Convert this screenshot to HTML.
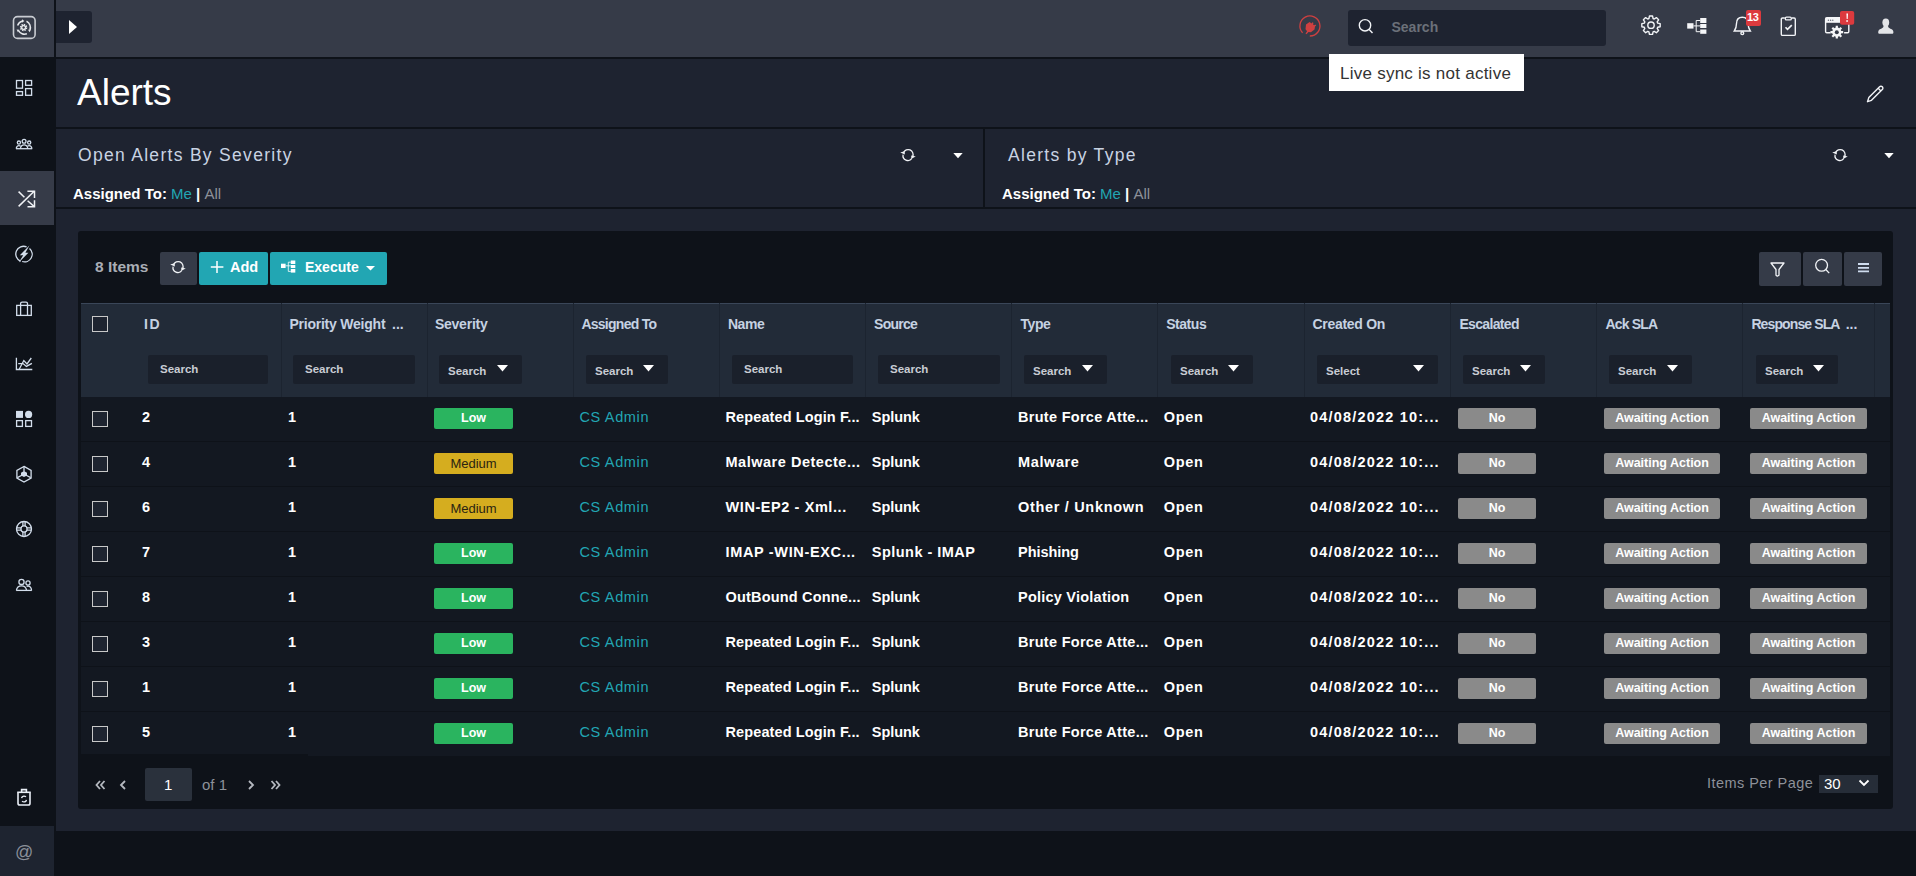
<!DOCTYPE html><html><head><meta charset="utf-8"><style>
*{box-sizing:border-box;margin:0;padding:0}
html,body{width:1916px;height:876px;overflow:hidden;background:#0e1219;font-family:"Liberation Sans", sans-serif;}
.a{position:absolute}
.t{position:absolute;white-space:nowrap;line-height:1}
svg{display:block}

</style></head><body>
<div class="a" style="left:0;top:0;width:54px;height:57px;background:#363b48"></div>
<div class="a" style="left:0;top:171px;width:54px;height:54px;background:#363b48"></div>
<div class="a" style="left:0;top:826px;width:54px;height:50px;background:#1e2430"></div>
<div class="a" style="left:56px;top:0;width:1860px;height:57px;background:#363b48"></div>
<div class="a" style="left:56px;top:11px;width:36px;height:32px;background:#1e2330;border-radius:0 3px 3px 0"></div>
<svg class="a" style="left:68px;top:19px" width="10" height="16" viewBox="0 0 10 16"><path d="M1 1L9 8L1 15z" fill="#fff"/></svg>
<div class="a" style="left:1348px;top:10px;width:258px;height:36px;background:#1e2330;border-radius:3px"></div>
<div class="t" style="left:1391.5px;top:20px;font-size:14px;color:#6b7079;font-weight:bold">Search</div>
<div class="a" style="left:56px;top:59px;width:1860px;height:772px;background:#1e2330"></div>
<div class="a" style="left:56px;top:127px;width:1860px;height:2px;background:#0e1219"></div>
<div class="a" style="left:56px;top:207px;width:1860px;height:2px;background:#0e1219"></div>
<div class="a" style="left:983px;top:129px;width:2px;height:78px;background:#0e1219"></div>
<div class="t" style="left:77px;top:74px;font-size:37px;color:#fff">Alerts</div>
<div class="t" style="left:78px;top:147px;font-size:17.5px;color:#c9d3e3;letter-spacing:1.3px">Open Alerts By Severity</div>
<div class="t" style="left:1008px;top:147px;font-size:17.5px;color:#c9d3e3;letter-spacing:1.3px">Alerts by Type</div>
<div class="t" style="left:73px;top:186px;font-size:15px;color:#fff;font-weight:bold">Assigned To: <span style="color:#22a6b3;font-weight:normal">Me</span> | <span style="color:#8d9199;font-weight:normal">All</span></div>
<div class="t" style="left:1002px;top:186px;font-size:15px;color:#fff;font-weight:bold">Assigned To: <span style="color:#22a6b3;font-weight:normal">Me</span> | <span style="color:#8d9199;font-weight:normal">All</span></div>
<div class="a" style="left:78px;top:231px;width:1815px;height:578px;background:#0e1219;border-radius:3px"></div>
<div class="t" style="left:95px;top:259px;font-size:15.5px;color:#a9adb5;font-weight:bold">8 Items</div>
<div class="a" style="left:160px;top:252px;width:37px;height:33px;background:#353b48;border-radius:2px"></div>
<div class="a" style="left:199px;top:252px;width:69px;height:33px;background:#22a6b3;border-radius:2px"></div>
<div class="a" style="left:270px;top:252px;width:117px;height:33px;background:#22a6b3;border-radius:2px"></div>
<div class="t" style="left:230px;top:260px;font-size:14.5px;color:#fff;font-weight:bold">Add</div>
<div class="t" style="left:305px;top:260px;font-size:14px;color:#fff;font-weight:bold">Execute</div>
<div class="a" style="left:1759px;top:252px;width:42px;height:34px;background:#353b48;border-radius:2px"></div>
<div class="a" style="left:1803px;top:252px;width:39px;height:34px;background:#353b48;border-radius:2px"></div>
<div class="a" style="left:1844px;top:252px;width:38px;height:34px;background:#353b48;border-radius:2px"></div>
<div class="a" style="left:81px;top:303px;width:1809px;height:94px;background:#222b38"></div>
<div class="a" style="left:81px;top:303px;width:1809px;height:1px;background:#3a4658"></div>
<div class="a" style="left:281px;top:303px;width:1px;height:94px;background:#1c2430"></div>
<div class="a" style="left:427px;top:303px;width:1px;height:94px;background:#1c2430"></div>
<div class="a" style="left:573px;top:303px;width:1px;height:94px;background:#1c2430"></div>
<div class="a" style="left:719px;top:303px;width:1px;height:94px;background:#1c2430"></div>
<div class="a" style="left:865px;top:303px;width:1px;height:94px;background:#1c2430"></div>
<div class="a" style="left:1011px;top:303px;width:1px;height:94px;background:#1c2430"></div>
<div class="a" style="left:1157px;top:303px;width:1px;height:94px;background:#1c2430"></div>
<div class="a" style="left:1304px;top:303px;width:1px;height:94px;background:#1c2430"></div>
<div class="a" style="left:1450px;top:303px;width:1px;height:94px;background:#1c2430"></div>
<div class="a" style="left:1596px;top:303px;width:1px;height:94px;background:#1c2430"></div>
<div class="a" style="left:1742px;top:303px;width:1px;height:94px;background:#1c2430"></div>
<div class="a" style="left:1874px;top:303px;width:1px;height:94px;background:#1c2430"></div>
<div class="a" style="left:92px;top:316px;width:16px;height:16px;border:1.5px solid #c8c8c8;background:#1e2430"></div>
<div class="t" style="left:143.9px;top:317px;font-size:14px;color:#c6d2e2;font-weight:bold;letter-spacing:1.6px">ID</div>
<div class="a" style="left:148px;top:355px;width:120px;height:29px;background:#1a202b;border-radius:2px"></div>
<div class="t" style="left:160px;top:364px;font-size:11.5px;color:#c8ccd4;font-weight:bold">Search</div>
<div class="t" style="left:289.4px;top:317px;font-size:14px;color:#c6d2e2;font-weight:bold;letter-spacing:-0.222px">Priority Weight</div>
<div class="t" style="left:392.0px;top:317px;font-size:14px;color:#c6d2e2;font-weight:bold">...</div>
<div class="a" style="left:293px;top:355px;width:122px;height:29px;background:#1a202b;border-radius:2px"></div>
<div class="t" style="left:305px;top:364px;font-size:11.5px;color:#c8ccd4;font-weight:bold">Search</div>
<div class="t" style="left:434.9px;top:317px;font-size:14px;color:#c6d2e2;font-weight:bold;letter-spacing:-0.226px">Severity</div>
<div class="a" style="left:439px;top:355px;width:83px;height:29px;background:#1a202b;border-radius:2px"></div>
<div class="t" style="left:448px;top:366px;font-size:11.5px;color:#c8ccd4;font-weight:bold">Search</div>
<svg class="a" style="left:497px;top:365px" width="11" height="7" viewBox="0 0 11 7"><path d="M0 0h11L5.5 6.5z" fill="#fff"/></svg>
<div class="t" style="left:581.4px;top:317px;font-size:14px;color:#c6d2e2;font-weight:bold;letter-spacing:-0.737px">Assigned To</div>
<div class="a" style="left:586px;top:355px;width:82px;height:29px;background:#1a202b;border-radius:2px"></div>
<div class="t" style="left:595px;top:366px;font-size:11.5px;color:#c8ccd4;font-weight:bold">Search</div>
<svg class="a" style="left:643px;top:365px" width="11" height="7" viewBox="0 0 11 7"><path d="M0 0h11L5.5 6.5z" fill="#fff"/></svg>
<div class="t" style="left:727.9px;top:317px;font-size:14px;color:#c6d2e2;font-weight:bold;letter-spacing:-0.447px">Name</div>
<div class="a" style="left:732px;top:355px;width:121px;height:29px;background:#1a202b;border-radius:2px"></div>
<div class="t" style="left:744px;top:364px;font-size:11.5px;color:#c8ccd4;font-weight:bold">Search</div>
<div class="t" style="left:874.1px;top:317px;font-size:14px;color:#c6d2e2;font-weight:bold;letter-spacing:-0.754px">Source</div>
<div class="a" style="left:878px;top:355px;width:122px;height:29px;background:#1a202b;border-radius:2px"></div>
<div class="t" style="left:890px;top:364px;font-size:11.5px;color:#c8ccd4;font-weight:bold">Search</div>
<div class="t" style="left:1020.4px;top:317px;font-size:14px;color:#c6d2e2;font-weight:bold;letter-spacing:-0.38px">Type</div>
<div class="a" style="left:1024px;top:355px;width:83px;height:29px;background:#1a202b;border-radius:2px"></div>
<div class="t" style="left:1033px;top:366px;font-size:11.5px;color:#c8ccd4;font-weight:bold">Search</div>
<svg class="a" style="left:1082px;top:365px" width="11" height="7" viewBox="0 0 11 7"><path d="M0 0h11L5.5 6.5z" fill="#fff"/></svg>
<div class="t" style="left:1166.2px;top:317px;font-size:14px;color:#c6d2e2;font-weight:bold;letter-spacing:-0.459px">Status</div>
<div class="a" style="left:1171px;top:355px;width:82px;height:29px;background:#1a202b;border-radius:2px"></div>
<div class="t" style="left:1180px;top:366px;font-size:11.5px;color:#c8ccd4;font-weight:bold">Search</div>
<svg class="a" style="left:1228px;top:365px" width="11" height="7" viewBox="0 0 11 7"><path d="M0 0h11L5.5 6.5z" fill="#fff"/></svg>
<div class="t" style="left:1312.4px;top:317px;font-size:14px;color:#c6d2e2;font-weight:bold;letter-spacing:-0.274px">Created On</div>
<div class="a" style="left:1317px;top:355px;width:121px;height:29px;background:#1a202b;border-radius:2px"></div>
<div class="t" style="left:1326px;top:366px;font-size:11.5px;color:#c8ccd4;font-weight:bold">Select</div>
<svg class="a" style="left:1413px;top:365px" width="11" height="7" viewBox="0 0 11 7"><path d="M0 0h11L5.5 6.5z" fill="#fff"/></svg>
<div class="t" style="left:1459.4px;top:317px;font-size:14px;color:#c6d2e2;font-weight:bold;letter-spacing:-0.659px">Escalated</div>
<div class="a" style="left:1463px;top:355px;width:82px;height:29px;background:#1a202b;border-radius:2px"></div>
<div class="t" style="left:1472px;top:366px;font-size:11.5px;color:#c8ccd4;font-weight:bold">Search</div>
<svg class="a" style="left:1520px;top:365px" width="11" height="7" viewBox="0 0 11 7"><path d="M0 0h11L5.5 6.5z" fill="#fff"/></svg>
<div class="t" style="left:1605.4px;top:317px;font-size:14px;color:#c6d2e2;font-weight:bold;letter-spacing:-0.813px">Ack SLA</div>
<div class="a" style="left:1609px;top:355px;width:83px;height:29px;background:#1a202b;border-radius:2px"></div>
<div class="t" style="left:1618px;top:366px;font-size:11.5px;color:#c8ccd4;font-weight:bold">Search</div>
<svg class="a" style="left:1667px;top:365px" width="11" height="7" viewBox="0 0 11 7"><path d="M0 0h11L5.5 6.5z" fill="#fff"/></svg>
<div class="t" style="left:1751.4px;top:317px;font-size:14px;color:#c6d2e2;font-weight:bold;letter-spacing:-0.883px">Response SLA</div>
<div class="t" style="left:1845.7px;top:317px;font-size:14px;color:#c6d2e2;font-weight:bold">...</div>
<div class="a" style="left:1756px;top:355px;width:82px;height:29px;background:#1a202b;border-radius:2px"></div>
<div class="t" style="left:1765px;top:366px;font-size:11.5px;color:#c8ccd4;font-weight:bold">Search</div>
<svg class="a" style="left:1813px;top:365px" width="11" height="7" viewBox="0 0 11 7"><path d="M0 0h11L5.5 6.5z" fill="#fff"/></svg>
<div class="a" style="left:81px;top:397px;width:1809px;height:44px;background:#131821"></div>
<div class="a" style="left:92px;top:411px;width:16px;height:16px;border:1.5px solid #c8c8c8;background:#1e2430"></div>
<div class="t" style="left:142.0px;top:410px;font-size:14.5px;color:#fff;font-weight:bold;letter-spacing:0px">2</div>
<div class="t" style="left:288.0px;top:410px;font-size:14.5px;color:#fff;font-weight:bold;letter-spacing:0px">1</div>
<div class="a" style="left:434px;top:408px;width:79px;height:21px;background:#2ab45f;border-radius:2px;color:#fff;font-size:12.5px;font-weight:bold;text-align:center;line-height:21px">Low</div>
<div class="t" style="left:579.5px;top:410px;font-size:14.5px;color:#22a6b3;font-weight:normal;letter-spacing:0.652px">CS Admin</div>
<div class="t" style="left:725.5px;top:410px;font-size:14.5px;color:#fff;font-weight:bold;letter-spacing:0.112px">Repeated Login F...</div>
<div class="t" style="left:871.8px;top:410px;font-size:14.5px;color:#fff;font-weight:bold;letter-spacing:-0.039px">Splunk</div>
<div class="t" style="left:1018.0px;top:410px;font-size:14.5px;color:#fff;font-weight:bold;letter-spacing:0.289px">Brute Force Atte...</div>
<div class="t" style="left:1163.7px;top:410px;font-size:14.5px;color:#fff;font-weight:bold;letter-spacing:0.663px">Open</div>
<div class="t" style="left:1310.0px;top:410px;font-size:14.5px;color:#fff;font-weight:bold;letter-spacing:1.187px">04/08/2022 10:...</div>
<div class="a" style="left:1458px;top:408px;width:78px;height:21px;background:#8a8a8a;border-radius:2px;color:#fff;font-size:12.5px;font-weight:bold;text-align:center;line-height:21px">No</div>
<div class="a" style="left:1604px;top:408px;width:116px;height:21px;background:#8a8a8a;border-radius:2px;color:#fff;font-size:12.5px;font-weight:bold;text-align:center;line-height:21px">Awaiting Action</div>
<div class="a" style="left:1750px;top:408px;width:117px;height:21px;background:#8a8a8a;border-radius:2px;color:#fff;font-size:12.5px;font-weight:bold;text-align:center;line-height:21px">Awaiting Action</div>
<div class="a" style="left:81px;top:442px;width:1809px;height:44px;background:#131821"></div>
<div class="a" style="left:92px;top:456px;width:16px;height:16px;border:1.5px solid #c8c8c8;background:#1e2430"></div>
<div class="t" style="left:142.0px;top:455px;font-size:14.5px;color:#fff;font-weight:bold;letter-spacing:0px">4</div>
<div class="t" style="left:288.0px;top:455px;font-size:14.5px;color:#fff;font-weight:bold;letter-spacing:0px">1</div>
<div class="a" style="left:434px;top:453px;width:79px;height:21px;background:#d5ad1f;border-radius:2px;color:#2a2412;font-size:13px;font-weight:normal;text-align:center;line-height:21px">Medium</div>
<div class="t" style="left:579.5px;top:455px;font-size:14.5px;color:#22a6b3;font-weight:normal;letter-spacing:0.652px">CS Admin</div>
<div class="t" style="left:725.5px;top:455px;font-size:14.5px;color:#fff;font-weight:bold;letter-spacing:0.519px">Malware Detecte...</div>
<div class="t" style="left:871.8px;top:455px;font-size:14.5px;color:#fff;font-weight:bold;letter-spacing:-0.039px">Splunk</div>
<div class="t" style="left:1018.0px;top:455px;font-size:14.5px;color:#fff;font-weight:bold;letter-spacing:0.619px">Malware</div>
<div class="t" style="left:1163.7px;top:455px;font-size:14.5px;color:#fff;font-weight:bold;letter-spacing:0.663px">Open</div>
<div class="t" style="left:1310.0px;top:455px;font-size:14.5px;color:#fff;font-weight:bold;letter-spacing:1.187px">04/08/2022 10:...</div>
<div class="a" style="left:1458px;top:453px;width:78px;height:21px;background:#8a8a8a;border-radius:2px;color:#fff;font-size:12.5px;font-weight:bold;text-align:center;line-height:21px">No</div>
<div class="a" style="left:1604px;top:453px;width:116px;height:21px;background:#8a8a8a;border-radius:2px;color:#fff;font-size:12.5px;font-weight:bold;text-align:center;line-height:21px">Awaiting Action</div>
<div class="a" style="left:1750px;top:453px;width:117px;height:21px;background:#8a8a8a;border-radius:2px;color:#fff;font-size:12.5px;font-weight:bold;text-align:center;line-height:21px">Awaiting Action</div>
<div class="a" style="left:81px;top:487px;width:1809px;height:44px;background:#131821"></div>
<div class="a" style="left:92px;top:501px;width:16px;height:16px;border:1.5px solid #c8c8c8;background:#1e2430"></div>
<div class="t" style="left:142.0px;top:500px;font-size:14.5px;color:#fff;font-weight:bold;letter-spacing:0px">6</div>
<div class="t" style="left:288.0px;top:500px;font-size:14.5px;color:#fff;font-weight:bold;letter-spacing:0px">1</div>
<div class="a" style="left:434px;top:498px;width:79px;height:21px;background:#d5ad1f;border-radius:2px;color:#2a2412;font-size:13px;font-weight:normal;text-align:center;line-height:21px">Medium</div>
<div class="t" style="left:579.5px;top:500px;font-size:14.5px;color:#22a6b3;font-weight:normal;letter-spacing:0.652px">CS Admin</div>
<div class="t" style="left:725.5px;top:500px;font-size:14.5px;color:#fff;font-weight:bold;letter-spacing:0.583px">WIN-EP2 - Xml...</div>
<div class="t" style="left:871.8px;top:500px;font-size:14.5px;color:#fff;font-weight:bold;letter-spacing:-0.039px">Splunk</div>
<div class="t" style="left:1018.0px;top:500px;font-size:14.5px;color:#fff;font-weight:bold;letter-spacing:0.682px">Other / Unknown</div>
<div class="t" style="left:1163.7px;top:500px;font-size:14.5px;color:#fff;font-weight:bold;letter-spacing:0.663px">Open</div>
<div class="t" style="left:1310.0px;top:500px;font-size:14.5px;color:#fff;font-weight:bold;letter-spacing:1.187px">04/08/2022 10:...</div>
<div class="a" style="left:1458px;top:498px;width:78px;height:21px;background:#8a8a8a;border-radius:2px;color:#fff;font-size:12.5px;font-weight:bold;text-align:center;line-height:21px">No</div>
<div class="a" style="left:1604px;top:498px;width:116px;height:21px;background:#8a8a8a;border-radius:2px;color:#fff;font-size:12.5px;font-weight:bold;text-align:center;line-height:21px">Awaiting Action</div>
<div class="a" style="left:1750px;top:498px;width:117px;height:21px;background:#8a8a8a;border-radius:2px;color:#fff;font-size:12.5px;font-weight:bold;text-align:center;line-height:21px">Awaiting Action</div>
<div class="a" style="left:81px;top:532px;width:1809px;height:44px;background:#131821"></div>
<div class="a" style="left:92px;top:546px;width:16px;height:16px;border:1.5px solid #c8c8c8;background:#1e2430"></div>
<div class="t" style="left:142.0px;top:545px;font-size:14.5px;color:#fff;font-weight:bold;letter-spacing:0px">7</div>
<div class="t" style="left:288.0px;top:545px;font-size:14.5px;color:#fff;font-weight:bold;letter-spacing:0px">1</div>
<div class="a" style="left:434px;top:543px;width:79px;height:21px;background:#2ab45f;border-radius:2px;color:#fff;font-size:12.5px;font-weight:bold;text-align:center;line-height:21px">Low</div>
<div class="t" style="left:579.5px;top:545px;font-size:14.5px;color:#22a6b3;font-weight:normal;letter-spacing:0.652px">CS Admin</div>
<div class="t" style="left:725.5px;top:545px;font-size:14.5px;color:#fff;font-weight:bold;letter-spacing:0.659px">IMAP -WIN-EXC...</div>
<div class="t" style="left:871.8px;top:545px;font-size:14.5px;color:#fff;font-weight:bold;letter-spacing:0.472px">Splunk - IMAP</div>
<div class="t" style="left:1018.0px;top:545px;font-size:14.5px;color:#fff;font-weight:bold;letter-spacing:-0.041px">Phishing</div>
<div class="t" style="left:1163.7px;top:545px;font-size:14.5px;color:#fff;font-weight:bold;letter-spacing:0.663px">Open</div>
<div class="t" style="left:1310.0px;top:545px;font-size:14.5px;color:#fff;font-weight:bold;letter-spacing:1.187px">04/08/2022 10:...</div>
<div class="a" style="left:1458px;top:543px;width:78px;height:21px;background:#8a8a8a;border-radius:2px;color:#fff;font-size:12.5px;font-weight:bold;text-align:center;line-height:21px">No</div>
<div class="a" style="left:1604px;top:543px;width:116px;height:21px;background:#8a8a8a;border-radius:2px;color:#fff;font-size:12.5px;font-weight:bold;text-align:center;line-height:21px">Awaiting Action</div>
<div class="a" style="left:1750px;top:543px;width:117px;height:21px;background:#8a8a8a;border-radius:2px;color:#fff;font-size:12.5px;font-weight:bold;text-align:center;line-height:21px">Awaiting Action</div>
<div class="a" style="left:81px;top:577px;width:1809px;height:44px;background:#131821"></div>
<div class="a" style="left:92px;top:591px;width:16px;height:16px;border:1.5px solid #c8c8c8;background:#1e2430"></div>
<div class="t" style="left:142.0px;top:590px;font-size:14.5px;color:#fff;font-weight:bold;letter-spacing:0px">8</div>
<div class="t" style="left:288.0px;top:590px;font-size:14.5px;color:#fff;font-weight:bold;letter-spacing:0px">1</div>
<div class="a" style="left:434px;top:588px;width:79px;height:21px;background:#2ab45f;border-radius:2px;color:#fff;font-size:12.5px;font-weight:bold;text-align:center;line-height:21px">Low</div>
<div class="t" style="left:579.5px;top:590px;font-size:14.5px;color:#22a6b3;font-weight:normal;letter-spacing:0.652px">CS Admin</div>
<div class="t" style="left:725.5px;top:590px;font-size:14.5px;color:#fff;font-weight:bold;letter-spacing:0.185px">OutBound Conne...</div>
<div class="t" style="left:871.8px;top:590px;font-size:14.5px;color:#fff;font-weight:bold;letter-spacing:-0.039px">Splunk</div>
<div class="t" style="left:1018.0px;top:590px;font-size:14.5px;color:#fff;font-weight:bold;letter-spacing:0.23px">Policy Violation</div>
<div class="t" style="left:1163.7px;top:590px;font-size:14.5px;color:#fff;font-weight:bold;letter-spacing:0.663px">Open</div>
<div class="t" style="left:1310.0px;top:590px;font-size:14.5px;color:#fff;font-weight:bold;letter-spacing:1.187px">04/08/2022 10:...</div>
<div class="a" style="left:1458px;top:588px;width:78px;height:21px;background:#8a8a8a;border-radius:2px;color:#fff;font-size:12.5px;font-weight:bold;text-align:center;line-height:21px">No</div>
<div class="a" style="left:1604px;top:588px;width:116px;height:21px;background:#8a8a8a;border-radius:2px;color:#fff;font-size:12.5px;font-weight:bold;text-align:center;line-height:21px">Awaiting Action</div>
<div class="a" style="left:1750px;top:588px;width:117px;height:21px;background:#8a8a8a;border-radius:2px;color:#fff;font-size:12.5px;font-weight:bold;text-align:center;line-height:21px">Awaiting Action</div>
<div class="a" style="left:81px;top:622px;width:1809px;height:44px;background:#131821"></div>
<div class="a" style="left:92px;top:636px;width:16px;height:16px;border:1.5px solid #c8c8c8;background:#1e2430"></div>
<div class="t" style="left:142.0px;top:635px;font-size:14.5px;color:#fff;font-weight:bold;letter-spacing:0px">3</div>
<div class="t" style="left:288.0px;top:635px;font-size:14.5px;color:#fff;font-weight:bold;letter-spacing:0px">1</div>
<div class="a" style="left:434px;top:633px;width:79px;height:21px;background:#2ab45f;border-radius:2px;color:#fff;font-size:12.5px;font-weight:bold;text-align:center;line-height:21px">Low</div>
<div class="t" style="left:579.5px;top:635px;font-size:14.5px;color:#22a6b3;font-weight:normal;letter-spacing:0.652px">CS Admin</div>
<div class="t" style="left:725.5px;top:635px;font-size:14.5px;color:#fff;font-weight:bold;letter-spacing:0.112px">Repeated Login F...</div>
<div class="t" style="left:871.8px;top:635px;font-size:14.5px;color:#fff;font-weight:bold;letter-spacing:-0.039px">Splunk</div>
<div class="t" style="left:1018.0px;top:635px;font-size:14.5px;color:#fff;font-weight:bold;letter-spacing:0.289px">Brute Force Atte...</div>
<div class="t" style="left:1163.7px;top:635px;font-size:14.5px;color:#fff;font-weight:bold;letter-spacing:0.663px">Open</div>
<div class="t" style="left:1310.0px;top:635px;font-size:14.5px;color:#fff;font-weight:bold;letter-spacing:1.187px">04/08/2022 10:...</div>
<div class="a" style="left:1458px;top:633px;width:78px;height:21px;background:#8a8a8a;border-radius:2px;color:#fff;font-size:12.5px;font-weight:bold;text-align:center;line-height:21px">No</div>
<div class="a" style="left:1604px;top:633px;width:116px;height:21px;background:#8a8a8a;border-radius:2px;color:#fff;font-size:12.5px;font-weight:bold;text-align:center;line-height:21px">Awaiting Action</div>
<div class="a" style="left:1750px;top:633px;width:117px;height:21px;background:#8a8a8a;border-radius:2px;color:#fff;font-size:12.5px;font-weight:bold;text-align:center;line-height:21px">Awaiting Action</div>
<div class="a" style="left:81px;top:667px;width:1809px;height:44px;background:#131821"></div>
<div class="a" style="left:92px;top:681px;width:16px;height:16px;border:1.5px solid #c8c8c8;background:#1e2430"></div>
<div class="t" style="left:142.0px;top:680px;font-size:14.5px;color:#fff;font-weight:bold;letter-spacing:0px">1</div>
<div class="t" style="left:288.0px;top:680px;font-size:14.5px;color:#fff;font-weight:bold;letter-spacing:0px">1</div>
<div class="a" style="left:434px;top:678px;width:79px;height:21px;background:#2ab45f;border-radius:2px;color:#fff;font-size:12.5px;font-weight:bold;text-align:center;line-height:21px">Low</div>
<div class="t" style="left:579.5px;top:680px;font-size:14.5px;color:#22a6b3;font-weight:normal;letter-spacing:0.652px">CS Admin</div>
<div class="t" style="left:725.5px;top:680px;font-size:14.5px;color:#fff;font-weight:bold;letter-spacing:0.112px">Repeated Login F...</div>
<div class="t" style="left:871.8px;top:680px;font-size:14.5px;color:#fff;font-weight:bold;letter-spacing:-0.039px">Splunk</div>
<div class="t" style="left:1018.0px;top:680px;font-size:14.5px;color:#fff;font-weight:bold;letter-spacing:0.289px">Brute Force Atte...</div>
<div class="t" style="left:1163.7px;top:680px;font-size:14.5px;color:#fff;font-weight:bold;letter-spacing:0.663px">Open</div>
<div class="t" style="left:1310.0px;top:680px;font-size:14.5px;color:#fff;font-weight:bold;letter-spacing:1.187px">04/08/2022 10:...</div>
<div class="a" style="left:1458px;top:678px;width:78px;height:21px;background:#8a8a8a;border-radius:2px;color:#fff;font-size:12.5px;font-weight:bold;text-align:center;line-height:21px">No</div>
<div class="a" style="left:1604px;top:678px;width:116px;height:21px;background:#8a8a8a;border-radius:2px;color:#fff;font-size:12.5px;font-weight:bold;text-align:center;line-height:21px">Awaiting Action</div>
<div class="a" style="left:1750px;top:678px;width:117px;height:21px;background:#8a8a8a;border-radius:2px;color:#fff;font-size:12.5px;font-weight:bold;text-align:center;line-height:21px">Awaiting Action</div>
<div class="a" style="left:81px;top:712px;width:1809px;height:44px;background:#131821"></div>
<div class="a" style="left:92px;top:726px;width:16px;height:16px;border:1.5px solid #c8c8c8;background:#1e2430"></div>
<div class="t" style="left:142.0px;top:725px;font-size:14.5px;color:#fff;font-weight:bold;letter-spacing:0px">5</div>
<div class="t" style="left:288.0px;top:725px;font-size:14.5px;color:#fff;font-weight:bold;letter-spacing:0px">1</div>
<div class="a" style="left:434px;top:723px;width:79px;height:21px;background:#2ab45f;border-radius:2px;color:#fff;font-size:12.5px;font-weight:bold;text-align:center;line-height:21px">Low</div>
<div class="t" style="left:579.5px;top:725px;font-size:14.5px;color:#22a6b3;font-weight:normal;letter-spacing:0.652px">CS Admin</div>
<div class="t" style="left:725.5px;top:725px;font-size:14.5px;color:#fff;font-weight:bold;letter-spacing:0.112px">Repeated Login F...</div>
<div class="t" style="left:871.8px;top:725px;font-size:14.5px;color:#fff;font-weight:bold;letter-spacing:-0.039px">Splunk</div>
<div class="t" style="left:1018.0px;top:725px;font-size:14.5px;color:#fff;font-weight:bold;letter-spacing:0.289px">Brute Force Atte...</div>
<div class="t" style="left:1163.7px;top:725px;font-size:14.5px;color:#fff;font-weight:bold;letter-spacing:0.663px">Open</div>
<div class="t" style="left:1310.0px;top:725px;font-size:14.5px;color:#fff;font-weight:bold;letter-spacing:1.187px">04/08/2022 10:...</div>
<div class="a" style="left:1458px;top:723px;width:78px;height:21px;background:#8a8a8a;border-radius:2px;color:#fff;font-size:12.5px;font-weight:bold;text-align:center;line-height:21px">No</div>
<div class="a" style="left:1604px;top:723px;width:116px;height:21px;background:#8a8a8a;border-radius:2px;color:#fff;font-size:12.5px;font-weight:bold;text-align:center;line-height:21px">Awaiting Action</div>
<div class="a" style="left:1750px;top:723px;width:117px;height:21px;background:#8a8a8a;border-radius:2px;color:#fff;font-size:12.5px;font-weight:bold;text-align:center;line-height:21px">Awaiting Action</div>
<div class="a" style="left:81px;top:754px;width:227px;height:2px;background:#0e1219"></div>
<div class="a" style="left:145px;top:768px;width:47px;height:33px;background:#2a313c;border-radius:2px"></div>
<div class="t" style="left:164px;top:777px;font-size:15px;color:#fff">1</div>
<div class="t" style="left:202px;top:777px;font-size:15px;color:#8d9199">of 1</div>
<div class="t" style="left:1707px;top:776px;font-size:14.5px;color:#8d9199;letter-spacing:0.45px">Items Per Page</div>
<div class="a" style="left:1819px;top:775px;width:59px;height:18px;background:#262d38"></div>
<div class="t" style="left:1824px;top:776px;font-size:15px;color:#fff">30</div>
<svg class="a" style="left:4px;top:7px;overflow:visible" width="40" height="40" viewBox="0 0 40 40" ><rect x="9.5" y="9.6" width="21.6" height="21.8" rx="4" fill="none" stroke="#c9ccd2" stroke-width="1.6"/><g fill="none" stroke="#e6e8ec" stroke-width="1.5"><path d="M13.6 18.5A6.8 6.8 0 0 1 18.5 14"/><path d="M22.5 14.3A6.8 6.8 0 0 1 25.9 23"/><path d="M22.9 26.7A6.8 6.8 0 0 1 14.5 23.5"/></g><g fill="#e6e8ec"><path d="M18 12.2l2.4 1.8-2.4 1.8z"/><path d="M27 22.5l-1.4 2.8-1.6-2.5z"/><path d="M12.6 22.6l2.8 0.2-1.4 2.6z"/></g><circle cx="19.6" cy="20.5" r="2.6" fill="none" stroke="#e6e8ec" stroke-width="2.2" stroke-dasharray="1.3 0.7"/><circle cx="19.6" cy="20.5" r="1.9" fill="none" stroke="#e6e8ec" stroke-width="1.2"/></svg>
<svg class="a" style="left:8px;top:72px;overflow:visible" width="32" height="32" viewBox="0 0 32 32" ><g fill="none" stroke="#d3deec" stroke-width="1.3"><rect x="8.5" y="8.5" width="6" height="7.7"/><rect x="17.6" y="8.5" width="6" height="4.8"/><rect x="8.5" y="19.6" width="6" height="3.7"/><rect x="17.6" y="16.6" width="6" height="6.7"/></g></svg>
<svg class="a" style="left:8px;top:128px;overflow:visible" width="32" height="32" viewBox="0 0 32 32" ><g fill="none" stroke="#d3deec" stroke-width="1.3"><circle cx="16.1" cy="13.2" r="1.9"/><circle cx="10.9" cy="14.6" r="1.6"/><circle cx="21.2" cy="14.6" r="1.6"/><path d="M12.3 20.6c0.6-2.6 2-3.8 3.8-3.8s3.2 1.2 3.8 3.8"/><path d="M8.2 20.6c0.3-2 1.2-3 2.7-3 0.8 0 1.4 0.3 1.9 0.8"/><path d="M23.9 20.6c-0.3-2-1.2-3-2.7-3-0.8 0-1.4 0.3-1.9 0.8"/><path d="M8 20.7h16.2"/></g></svg>
<svg class="a" style="left:8px;top:183px;overflow:visible" width="32" height="32" viewBox="0 0 32 32" ><g fill="none" stroke="#f0f2f5" stroke-width="1.5"><path d="M10.6 8.6l5.8 5.6"/><path d="M10.6 23.4L26.2 8.3"/><path d="M19.6 17.8l6.4 5.6"/><path d="M19.4 8.3h7.1v6.6"/><path d="M26.5 17.3v6.4h-7"/></g></svg>
<svg class="a" style="left:8px;top:238px;overflow:visible" width="32" height="32" viewBox="0 0 32 32" ><g fill="none" stroke="#d3deec" stroke-width="1.3"><path d="M12.6 23.3A7.6 7.6 0 0 1 18.6 8.9"/><path d="M21.5 10.5A7.6 7.6 0 0 1 14.2 23.5"/></g><path d="M21.4 7.6L11.8 17.2h3.4L10.8 24.4 20.4 14.8h-3z" fill="#d3deec"/></svg>
<svg class="a" style="left:8px;top:293px;overflow:visible" width="32" height="32" viewBox="0 0 32 32" ><g fill="none" stroke="#d3deec" stroke-width="1.3"><rect x="8.7" y="12.4" width="14.6" height="10"/><path d="M12.6 12.4V10.6c0-0.9 0.6-1.5 1.5-1.5h3.9c0.9 0 1.5 0.6 1.5 1.5v1.8"/><path d="M12.6 12.4v10M19.5 12.4v10"/></g></svg>
<svg class="a" style="left:8px;top:348px;overflow:visible" width="32" height="32" viewBox="0 0 32 32" ><g fill="none" stroke="#d3deec" stroke-width="1.3"><path d="M8.4 9.8v11.7h15.9"/><path d="M10.2 15.6h4.8l3.4 2.8 5.5-3"/><path d="M11.2 21.2l4.6-8.7 3.2 3.5 4.3-6"/></g></svg>
<svg class="a" style="left:8px;top:403px;overflow:visible" width="32" height="32" viewBox="0 0 32 32" ><rect x="8" y="7.9" width="7" height="7" fill="#d3deec"/><circle cx="20.6" cy="11.4" r="3.6" fill="#d3deec"/><g fill="none" stroke="#d3deec" stroke-width="1.3"><rect x="8.6" y="17.6" width="5.8" height="5.8"/><rect x="17.7" y="17.6" width="5.8" height="5.8"/></g></svg>
<svg class="a" style="left:8px;top:458px;overflow:visible" width="32" height="32" viewBox="0 0 32 32" ><g fill="none" stroke="#d3deec" stroke-width="1.3"><path d="M16 8.4l7.1 4v7.7L16 24.1l-7.1-4v-7.7z"/><path d="M16 8.4v5.2M9.3 19.6l5-2.6M22.7 19.6l-5-2.6"/></g><path d="M16 13l3 1.8v2.6L16 19l-3-1.6v-2.6z" fill="#d3deec"/></svg>
<svg class="a" style="left:8px;top:513px;overflow:visible" width="32" height="32" viewBox="0 0 32 32" ><g fill="none" stroke="#d3deec" stroke-width="1.3"><circle cx="16" cy="16" r="7.5"/><circle cx="16" cy="16" r="3.1"/><path d="M14.9 8.6v4.3M17.1 8.6v4.3M14.9 19.1v4.3M17.1 19.1v4.3M8.6 14.9h4.3M8.6 17.1h4.3M19.1 14.9h4.3M19.1 17.1h4.3"/></g></svg>
<svg class="a" style="left:8px;top:569px;overflow:visible" width="32" height="32" viewBox="0 0 32 32" ><g fill="none" stroke="#d3deec" stroke-width="1.3"><circle cx="13.5" cy="12.9" r="2.6"/><circle cx="20" cy="14" r="2.1"/><path d="M8.4 21.4c0.4-3 2.2-4.6 5.1-4.6s4.7 1.6 5.1 4.6"/><path d="M18.6 17.6c0.4-0.3 0.9-0.4 1.4-0.4 2 0 3.3 1.4 3.6 4.2"/><path d="M8.2 21.4h15.6"/></g></svg>
<svg class="a" style="left:8px;top:781px;overflow:visible" width="32" height="32" viewBox="0 0 32 32" ><g fill="none" stroke="#e9eef6" stroke-width="1.6"><path d="M9.2 11.3h13.6"/><path d="M13.6 11v-2.4h4.8v2.4"/><path d="M10 11.6v10.6c0 1 0.8 1.8 1.8 1.8h8.4c1 0 1.8-0.8 1.8-1.8V11.6"/><path d="M13.6 17.2c0.2-1.3 1.2-2.1 2.4-2.1 0.8 0 1.5 0.3 1.9 0.9M18.4 18.8c-0.2 1.3-1.2 2.1-2.4 2.1-0.8 0-1.5-0.3-1.9-0.9" stroke-width="1.3"/></g></svg>
<div class="t" style="left:15px;top:843px;font-size:18px;color:#8a8f99">@</div>
<svg class="a" style="left:1294px;top:10px;overflow:visible" width="32" height="32" viewBox="0 0 32 32" ><path d="M8.6 22.8A10 10 0 1 1 15.8 26" fill="none" stroke="#cf4040" stroke-width="1.3"/><path d="M12 14.5l3.6-2.4 2 1.5 0.6-1.3 1.4 0.6-0.7 1.3 1.2 1.1 1.2-0.9 0.9 1.1-1.2 1-0.5 2.9-3.6 2.8-2.4-0.3-2 2.3-1-0.7 1.6-2.2-1.6-2.1z" fill="#cf4040"/></svg>
<svg class="a" style="left:1355px;top:15px;overflow:visible" width="24" height="24" viewBox="0 0 24 24" ><g fill="none" stroke="#f2f4f7" stroke-width="1.4"><circle cx="10" cy="10.3" r="5.7"/><path d="M14.2 14.5l3.3 3.5"/></g></svg>
<svg class="a" style="left:1634px;top:9px;overflow:visible" width="32" height="32" viewBox="0 0 32 32" ><path d="M14.93 9.51L15.43 7.03L18.57 7.03L19.07 9.51L20.27 10.01L22.37 8.61L24.59 10.83L23.19 12.93L23.69 14.13L26.17 14.63L26.17 17.77L23.69 18.27L23.19 19.47L24.59 21.57L22.37 23.79L20.27 22.39L19.07 22.89L18.57 25.37L15.43 25.37L14.93 22.89L13.73 22.39L11.63 23.79L9.41 21.57L10.81 19.47L10.31 18.27L7.83 17.77L7.83 14.63L10.31 14.13L10.81 12.93L9.41 10.83L11.63 8.61L13.73 10.01z" fill="none" stroke="#f2f4f7" stroke-width="1.4" stroke-linejoin="round"/><circle cx="17" cy="16.2" r="3.2" fill="none" stroke="#f2f4f7" stroke-width="1.4"/></svg>
<svg class="a" style="left:1680px;top:9px;overflow:visible" width="32" height="32" viewBox="0 0 32 32" ><g fill="#f5f6f8"><rect x="7.2" y="14.2" width="6.3" height="5.4"/><rect x="20.2" y="9" width="6.2" height="5"/><rect x="20.2" y="15" width="6.2" height="4"/><rect x="20.2" y="20.5" width="6.2" height="4.3"/></g><g fill="none" stroke="#f5f6f8" stroke-width="1"><path d="M13.5 16.9h6.7M16.2 11.5v11.2M16.2 11.5h4M16.2 22.7h4"/></g></svg>
<svg class="a" style="left:1726px;top:7px;overflow:visible" width="40" height="32" viewBox="0 0 40 32" ><g fill="none" stroke="#f2f4f7" stroke-width="1.4"><path d="M8.3 24c1.6-2.3 2.2-3.4 2.2-7.5 0-4 2.3-6.3 5.8-6.3s5.8 2.3 5.8 6.3c0 4.1 0.6 5.2 2.2 7.5z"/><circle cx="16.3" cy="26.2" r="1.4"/></g><rect x="20" y="2.9" width="15" height="16" rx="2" fill="#dc3a3e"/></svg>
<div class="t" style="left:1747px;top:12px;font-size:11px;color:#fff;font-weight:bold;letter-spacing:-0.3px">13</div>
<svg class="a" style="left:1766px;top:7px;overflow:visible" width="40" height="32" viewBox="0 0 40 32" ><g fill="none" stroke="#f2f4f7" stroke-width="1.4"><path d="M18.8 11H16.5c-0.7 0-1.2 0.5-1.2 1.2v15c0 0.7 0.5 1.2 1.2 1.2h11.6c0.7 0 1.2-0.5 1.2-1.2v-15c0-0.7-0.5-1.2-1.2-1.2h-2.3"/><rect x="19.3" y="10.1" width="6" height="2.8" rx="1.2"/><path d="M19.5 20.2l2 2.2 4.3-4.2" stroke-width="1.7"/></g></svg>
<svg class="a" style="left:1820px;top:7px;overflow:visible" width="40" height="32" viewBox="0 0 40 32" ><g fill="none" stroke="#f5f6f8" stroke-width="1.4"><path d="M10.5 25.8H6.8c-0.7 0-1.2-0.5-1.2-1.2V12c0-0.7 0.5-1.2 1.2-1.2h20.8c0.7 0 1.2 0.5 1.2 1.2v12.6c0 0.7-0.5 1.2-1.2 1.2h-3.5"/></g><rect x="5.6" y="10.8" width="23.2" height="5" fill="#f5f6f8"/><g fill="#6a6f7c"><circle cx="8.4" cy="13.3" r="0.7"/><circle cx="10.6" cy="13.3" r="0.7"/><circle cx="12.8" cy="13.3" r="0.7"/></g><circle cx="16.8" cy="25.2" r="4.6" fill="#f5f6f8"/><g stroke="#f5f6f8" stroke-width="2.2"><path d="M16.8 18.8v12.8M10.4 25.2h12.8M12.3 20.7l9 9M21.3 20.7l-9 9"/></g><circle cx="16.8" cy="25.2" r="2" fill="#363b48"/><rect x="20" y="4" width="14.2" height="13.7" rx="2" fill="#dc3a3e"/><path d="M26.4 6.6h1.6l-0.3 5.5h-1z" fill="#fff"/><rect x="26.3" y="13.2" width="1.6" height="1.6" fill="#fff"/></svg>
<svg class="a" style="left:1870px;top:7px;overflow:visible" width="32" height="32" viewBox="0 0 32 32" ><g fill="#e4e5e8"><ellipse cx="15.8" cy="15.6" rx="3.4" ry="4"/><path d="M13.6 18.6c0 1.6-0.7 2.4-2.4 3.1-2 0.8-3 1.6-3 3.5 0 0.9 0.5 1.6 1.5 1.6h12.2c1 0 1.5-0.7 1.5-1.6 0-1.9-1-2.7-3-3.5-1.7-0.7-2.4-1.5-2.4-3.1z"/></g></svg>
<svg class="a" style="left:1859px;top:78px;overflow:visible" width="32" height="32" viewBox="0 0 32 32" ><g fill="none" stroke="#f2f4f7" stroke-width="1.4" stroke-linejoin="round"><path d="M9.8 19.6l10.8-10.8c0.8-0.8 2-0.8 2.7 0s0.8 2 0 2.7L12.5 22.3l-4 1.4z"/><path d="M19.2 10.2l2.7 2.7"/></g></svg>
<svg class="a" style="left:898px;top:145px;overflow:visible" width="20" height="20" viewBox="0 0 20 20" ><g fill="none" stroke="#f2f4f7" stroke-width="1.3"><path d="M5.6 7.6A4.9 4.9 0 0 1 14.7 11.4"/><path d="M13.9 13.4A4.9 4.9 0 0 1 5.1 9.6"/></g><path d="M2.2 7.4L6.6 6.2 6.9 9.6z M17.8 11.4L13.2 10.4 13.3 13.8z" fill="#f2f4f7"/></svg>
<svg class="a" style="left:1830px;top:145px;overflow:visible" width="20" height="20" viewBox="0 0 20 20" ><g fill="none" stroke="#f2f4f7" stroke-width="1.3"><path d="M5.6 7.6A4.9 4.9 0 0 1 14.7 11.4"/><path d="M13.9 13.4A4.9 4.9 0 0 1 5.1 9.6"/></g><path d="M2.2 7.4L6.6 6.2 6.9 9.6z M17.8 11.4L13.2 10.4 13.3 13.8z" fill="#f2f4f7"/></svg>
<svg class="a" style="left:168px;top:257px;overflow:visible" width="20" height="20" viewBox="0 0 20 20" ><g fill="none" stroke="#f2f4f7" stroke-width="1.3"><path d="M5.6 7.6A4.9 4.9 0 0 1 14.7 11.4"/><path d="M13.9 13.4A4.9 4.9 0 0 1 5.1 9.6"/></g><path d="M2.2 7.4L6.6 6.2 6.9 9.6z M17.8 11.4L13.2 10.4 13.3 13.8z" fill="#f2f4f7"/></svg>
<svg class="a" style="left:952.5px;top:153px;overflow:visible" width="10" height="6" viewBox="0 0 10 6" ><path d="M0.3 0h9.4L5 5.2z" fill="#fff"/></svg>
<svg class="a" style="left:1884px;top:153px;overflow:visible" width="10" height="6" viewBox="0 0 10 6" ><path d="M0.3 0h9.4L5 5.2z" fill="#fff"/></svg>
<svg class="a" style="left:210px;top:260px;overflow:visible" width="14" height="14" viewBox="0 0 14 14" ><path d="M7 1v12M0.8 7h12.6" stroke="#fff" stroke-width="1.5"/></svg>
<svg class="a" style="left:280px;top:259px;overflow:visible" width="18" height="16" viewBox="0 0 18 16" ><g fill="#fff"><rect x="1" y="4.7" width="4.6" height="4.3"/><rect x="10.8" y="1.5" width="4.5" height="3.5"/><rect x="10.8" y="6" width="4.5" height="3"/><rect x="10.8" y="10" width="4.5" height="3.6"/></g><path d="M5.6 6.8h5.2M8.3 3.2v9.2M8.3 3.2h2.5M8.3 12.4h2.5" stroke="#fff" stroke-width="0.8" fill="none"/></svg>
<svg class="a" style="left:366px;top:266px;overflow:visible" width="9" height="5" viewBox="0 0 9 5" ><path d="M0 0h9L4.5 4.5z" fill="#fff"/></svg>
<svg class="a" style="left:1770px;top:262px;overflow:visible" width="16" height="15" viewBox="0 0 16 15" ><path d="M1 1h13L9 7.5v5.8L7.3 14.2 6 13.3V7.5z" fill="none" stroke="#f2f4f7" stroke-width="1.3" stroke-linejoin="round"/></svg>
<svg class="a" style="left:1814px;top:258px;overflow:visible" width="18" height="18" viewBox="0 0 18 18" ><g fill="none" stroke="#f2f4f7" stroke-width="1.3"><circle cx="7.6" cy="7.3" r="5.9"/><path d="M11.8 11.5l3.4 3.6"/></g></svg>
<svg class="a" style="left:1857px;top:262px;overflow:visible" width="13" height="11" viewBox="0 0 13 11" ><g stroke="#cfdcee" stroke-width="1.8"><path d="M1 2h11M1 5.9h11M1 9.3h11"/></g></svg>
<svg class="a" style="left:95px;top:780px;overflow:visible" width="11" height="10" viewBox="0 0 11 10" ><path d="M5 1L1.5 5 5 9M9.5 1L6 5 9.5 9" fill="none" stroke="#b5b9c0" stroke-width="1.8"/></svg>
<svg class="a" style="left:119px;top:780px;overflow:visible" width="8" height="10" viewBox="0 0 8 10" ><path d="M6 1L2 5 6 9" fill="none" stroke="#b5b9c0" stroke-width="1.8"/></svg>
<svg class="a" style="left:247px;top:780px;overflow:visible" width="8" height="10" viewBox="0 0 8 10" ><path d="M2 1L6 5 2 9" fill="none" stroke="#b5b9c0" stroke-width="1.8"/></svg>
<svg class="a" style="left:270px;top:780px;overflow:visible" width="11" height="10" viewBox="0 0 11 10" ><path d="M1.5 1L5 5 1.5 9M6 1L9.5 5 6 9" fill="none" stroke="#b5b9c0" stroke-width="1.8"/></svg>
<svg class="a" style="left:1858px;top:778px;overflow:visible" width="12" height="10" viewBox="0 0 12 10" ><path d="M1.5 2.5L6 7l4.5-4.5" fill="none" stroke="#fff" stroke-width="1.8"/></svg>
<div class="a" style="left:1329px;top:54px;width:195px;height:37px;background:#fff"></div>
<div class="t" style="left:1340px;top:65px;font-size:17px;color:#333;letter-spacing:0.25px">Live sync is not active</div>
</body></html>
